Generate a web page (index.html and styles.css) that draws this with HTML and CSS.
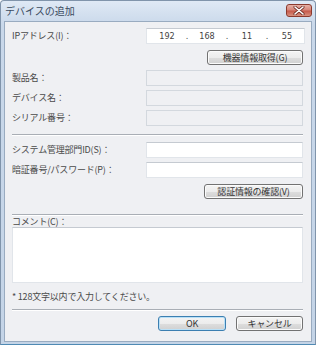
FILE: index.html
```html
<!DOCTYPE html>
<html lang="ja">
<head>
    <meta charset="UTF-8">
    <meta name="viewport" content="width=device-width, initial-scale=1.0">
    <title>デバイスの追加</title>
    <link rel="stylesheet" href="styles.css">
</head>
<body>
    <div class="window">
        <div class="titlebar">
            <span class="title">デバイスの追加</span>
            <div class="close-btn">
                <svg width="12" height="9" viewBox="0 0 12 9">
                    <path d="M2 1 L10 8 M10 1 L2 8" stroke="#6b2a22" stroke-width="3" stroke-linecap="round"/>
                    <path d="M2 1 L10 8 M10 1 L2 8" stroke="#ffffff" stroke-width="1.6" stroke-linecap="round"/>
                </svg>
            </div>
        </div>

        <div class="client">
            <div class="field-row">
                <label class="field-label">IPアドレス(I)：</label>
                <div class="ip-box">
                    <span class="ip-part">192</span><span class="ip-dot">.</span>
                    <span class="ip-part">168</span><span class="ip-dot">.</span>
                    <span class="ip-part">11</span><span class="ip-dot">.</span>
                    <span class="ip-part">55</span>
                </div>
            </div>
            <div class="action-row">
                <button class="btn btn-get">機器情報取得(G)</button>
            </div>

            <div class="field-row row-first">
                <label class="field-label">製品名：</label>
                <div class="text-box disabled"></div>
            </div>
            <div class="field-row row-tight">
                <label class="field-label">デバイス名：</label>
                <div class="text-box disabled"></div>
            </div>
            <div class="field-row row-tight">
                <label class="field-label">シリアル番号：</label>
                <div class="text-box disabled"></div>
            </div>

            <div class="separator sep-1"></div>

            <div class="field-row row-after-sep">
                <label class="field-label">システム管理部門ID(S)：</label>
                <div class="text-box"></div>
            </div>
            <div class="field-row row-tight">
                <label class="field-label">暗証番号/パスワード(P)：</label>
                <div class="text-box"></div>
            </div>
            <div class="action-row">
                <button class="btn btn-verify">認証情報の確認(V)</button>
            </div>

            <div class="separator sep-2"></div>

            <div class="comment-label">コメント(C)：</div>
            <div class="comment-box"></div>
            <div class="note">* 128文字以内で入力してください。</div>

            <div class="separator sep-3"></div>

            <div class="footer">
                <button class="btn btn-ok">OK</button>
                <button class="btn btn-cancel">キャンセル</button>
            </div>
        </div>
    </div>
</body>
</html>
```

FILE: styles.css
```css
body {
    margin: 0;
    font-family: "Noto Sans CJK JP", "Noto Sans", sans-serif;
    background: #ffffff;
}
.window {
    width: 316px;
    height: 345px;
    box-sizing: border-box;
    border: 1px solid #8094ab;
    border-radius: 4px 4px 0 0;
    background: linear-gradient(#dfe9f5, #c9d8ea 24px, #c4d4e7);
    padding: 0 3px 2px 3px;
    display: flex;
    flex-direction: column;
    border-bottom-color: #4f8ab4;
}
.titlebar {
    height: 20px;
    display: flex;
    align-items: center;
    justify-content: space-between;
    padding: 0 0 0 1px;
}
.title {
    font-size: 10px;
    color: #3a4a5e;
    line-height: 20px;
}
.close-btn {
    width: 24px;
    height: 11px;
    margin: 3px 0 0 0;
    border: 1px solid #8b3a2e;
    border-radius: 3px;
    background: linear-gradient(#e6b1a6, #d6867a 45%, #c65a4b 55%, #d8917f);
    display: flex;
    align-items: center;
    justify-content: center;
    align-self: flex-start;
}
.client {
    flex: 1;
    background: #eff0f3;
    border: 1px solid #99abc0;
    padding: 6px 8px 0 7px;
    overflow: hidden;
    color: #4a4a4a;
    font-size: 9px;
    letter-spacing: -0.2px;
}
.field-row {
    display: flex;
    align-items: center;
    height: 16px;
}
.row-first {
    margin-top: 5px;
}
.row-tight {
    margin-top: 4px;
}
.row-after-sep {
    margin-top: 6px;
}
.field-label {
    width: 134px;
    flex-shrink: 0;
    white-space: nowrap;
    line-height: 16px;
}
.text-box, .ip-box {
    flex: 1;
    height: 16px;
    box-sizing: border-box;
    background: #ffffff;
    border: 1px solid #e1e5ea;
    border-top-color: #c5cad1;
}
.text-box.disabled {
    background: #eff0f3;
    border-color: #d3d8de;
}
.ip-box {
    display: flex;
    align-items: center;
    padding-left: 3px;
    font-size: 9px;
    color: #444444;
    letter-spacing: 0;
    font-family: "DejaVu Sans Condensed", "Liberation Sans", sans-serif;
}
.ip-part {
    width: 34px;
    text-align: center;
}
.ip-dot {
    width: 6px;
    text-align: center;
}
.action-row {
    display: flex;
    justify-content: flex-end;
    margin-top: 6px;
}
.btn {
    height: 15px;
    box-sizing: border-box;
    padding: 0;
    border: 1px solid #727272;
    border-radius: 3px;
    background: linear-gradient(#f4f4f4 0%, #ececec 50%, #dedede 50%, #d0d0d0 100%);
    box-shadow: inset 0 0 0 1px #fbfbfb;
    font-family: "Noto Sans CJK JP", "Noto Sans", sans-serif;
    font-size: 9px;
    letter-spacing: -0.2px;
    line-height: 13px;
    color: #333333;
}
.btn-get {
    width: 96px;
}
.btn-verify {
    width: 99px;
}
.separator {
    height: 0;
    border-top: 1px solid #a9aeb5;
    border-bottom: 1px solid #ffffff;
}
.sep-1 {
    margin-top: 8px;
}
.sep-2 {
    margin-top: 15px;
}
.sep-3 {
    margin-top: 6px;
}
.comment-label {
    margin-top: 0;
    line-height: 10px;
    height: 10px;
    padding-top: 1px;
}
.comment-box {
    margin-top: 0;
    height: 56px;
    box-sizing: border-box;
    background: #ffffff;
    border: 1px solid #e1e5ea;
    border-top-color: #c5cad1;
}
.note {
    margin-top: 8px;
    line-height: 12px;
}
.footer {
    display: flex;
    justify-content: flex-end;
    gap: 10px;
    margin-top: 5px;
}
.btn-ok {
    width: 68px;
    border-color: #3c7fb1;
    box-shadow: inset 0 0 0 1px #b9e0f7;
}
.btn-cancel {
    width: 67px;
}
```
